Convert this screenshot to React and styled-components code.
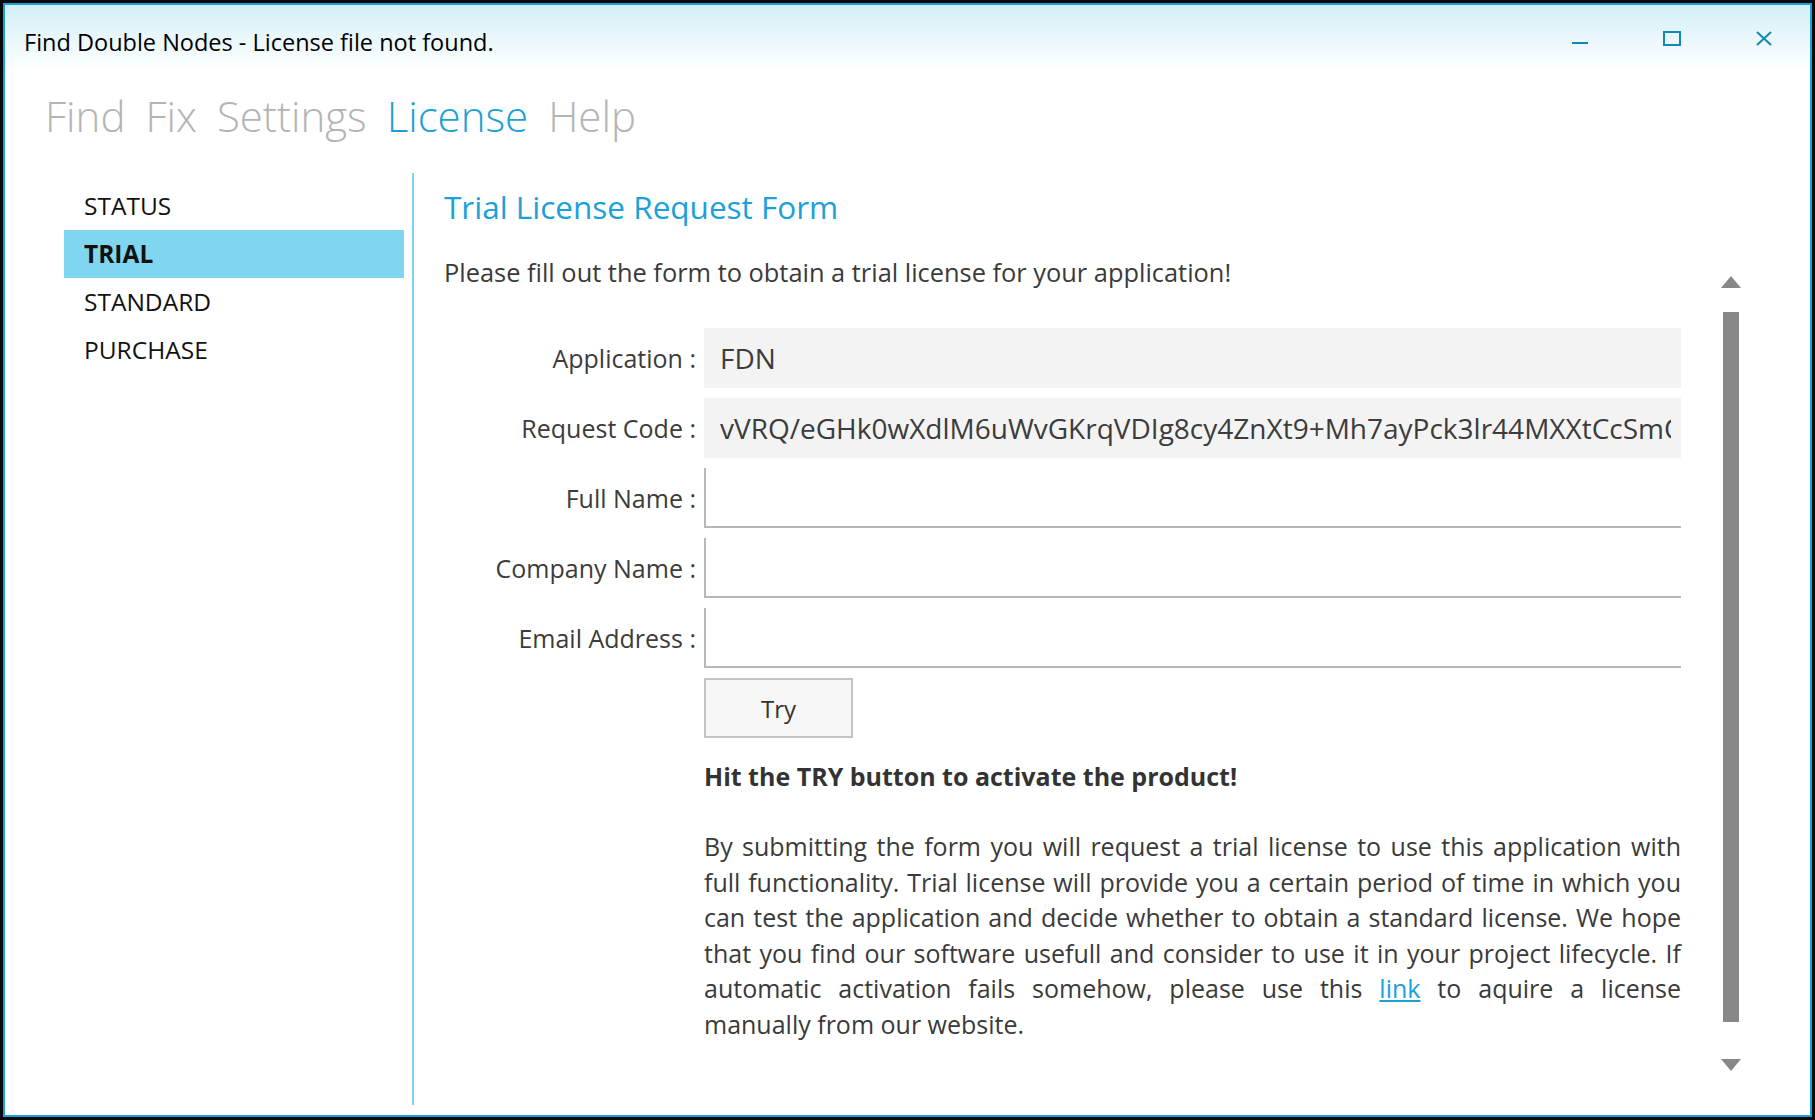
import React from "react";
import styled, { createGlobalStyle } from "styled-components";

const GlobalStyle = createGlobalStyle`
  html, body {
    margin: 0;
    padding: 0;
    background: #0a0a0a;
  }
  body {
    font-family: "Open Sans", "Noto Sans", sans-serif;
    overflow: hidden;
  }
`;

const Frame = styled.div`
  box-sizing: border-box;
  width: 1815px;
  height: 1120px;
  border: 3px solid #0a0a0a;
`;

const Window = styled.div`
  box-sizing: border-box;
  height: 100%;
  border: 2px solid #17a3d9;
  background: #fff;
  display: flex;
  flex-direction: column;
`;

const TitleBar = styled.div`
  height: 66px;
  flex: none;
  display: flex;
  justify-content: space-between;
  background: linear-gradient(to bottom, #d3eff8 0%, #ffffff 100%);
`;

const Title = styled.div`
  padding: 22px 0 0 19px;
  font-size: 23.5px;
  line-height: 30px;
  color: #000;
`;

const Controls = styled.div`
  display: flex;
`;

const Control = styled.button`
  width: 92px;
  height: 66px;
  padding: 26px 0 0;
  border: none;
  background: transparent;
  display: flex;
  justify-content: center;
  align-items: flex-start;
  color: #1288b7;
`;

const NavBar = styled.nav`
  height: 102px;
  flex: none;
  box-sizing: border-box;
  padding: 17px 0 0 40px;
  display: flex;
  gap: 20px;
`;

const NavItem = styled.span`
  font-size: 42px;
  font-weight: 300;
  line-height: 56px;
  color: ${(p) => (p.$active ? "#1ba1d8" : "#b4b4b4")};
`;

const Body = styled.div`
  flex: 1;
  display: grid;
  grid-template-columns: 407px 2px 1fr;
  padding-bottom: 10px;
  min-height: 0;
`;

const Sidebar = styled.ul`
  list-style: none;
  margin: 0;
  padding: 9px 0 0 59px;
`;

const SideItem = styled.li`
  box-sizing: border-box;
  width: 340px;
  height: 48px;
  padding-left: 20px;
  line-height: 48px;
  font-size: 24.5px;
  color: #111;
  font-weight: ${(p) => (p.$active ? 700 : 400)};
  background: ${(p) => (p.$active ? "#80d5ef" : "transparent")};
`;

const Divider = styled.div`
  background: #80d2ee;
`;

const Content = styled.div`
  padding: 14px 0 0 30px;
  display: grid;
  grid-template-columns: 1237px 22px;
  column-gap: 39px;
  align-items: start;
`;

const Main = styled.div`
  display: flex;
  flex-direction: column;
`;

const Heading = styled.h1`
  margin: 0;
  font-size: 31.5px;
  line-height: 40px;
  font-weight: 400;
  color: #1ba1d8;
`;

const Intro = styled.p`
  margin: 29px 0 0;
  font-size: 25.4px;
  line-height: 32px;
  color: #3a3a3a;
`;

const Form = styled.div`
  margin-top: 40px;
  display: grid;
  grid-template-columns: 252px 977px;
  grid-auto-rows: 60px;
  column-gap: 8px;
  row-gap: 10px;
`;

const Label = styled.label`
  display: flex;
  align-items: center;
  justify-content: flex-end;
  font-size: 25px;
  color: #3c3c3c;
  white-space: nowrap;
`;

const ReadOnly = styled.div`
  display: flex;
  align-items: center;
  padding: 0 10px 0 16px;
  background: #f3f3f3;
  font-size: 28px;
  color: #3c3c3c;
  min-width: 0;
`;

const Clip = styled.span`
  display: block;
  overflow: hidden;
  white-space: nowrap;
`;

const Input = styled.input`
  box-sizing: border-box;
  width: 100%;
  height: 60px;
  border: none;
  border-left: 2px solid #b8b8b8;
  border-bottom: 2px solid #b8b8b8;
  outline: none;
  background: #fff;
  font: inherit;
  font-size: 24px;
`;

const TryButton = styled.button`
  grid-column: 2;
  justify-self: start;
  width: 149px;
  height: 60px;
  border: 2px solid #c3c3c3;
  background: #f7f7f7;
  font-family: inherit;
  font-size: 24px;
  color: #333;
`;

const Hint = styled.p`
  margin: 22px 0 0 260px;
  font-size: 25px;
  line-height: 32px;
  font-weight: 700;
  color: #333;
`;

const Text = styled.p`
  margin: 37px 0 0 260px;
  width: 977px;
  font-size: 25px;
  line-height: 35.5px;
  color: #3a3a3a;
`;

const Line = styled.span`
  display: block;
  white-space: nowrap;
  text-align: justify;
  text-align-last: ${(p) => (p.$last ? "left" : "justify")};
`;

const Link = styled.a`
  color: #1ba1d8;
  text-decoration: underline;
`;

const ScrollBar = styled.div`
  margin-top: 89px;
  height: 795px;
  display: flex;
  flex-direction: column;
  align-items: center;
`;

const Arrow = styled.div`
  width: 0;
  height: 0;
  border-left: 10px solid transparent;
  border-right: 10px solid transparent;
  ${(p) =>
    p.$down
      ? "border-top: 12px solid #878787;"
      : "border-bottom: 12px solid #878787;"}
`;

const Thumb = styled.div`
  width: 16px;
  flex: 1;
  margin: 24px 0 37px;
  background: #878787;
`;

const fields = [
  { label: "Application :", value: "FDN" },
  {
    label: "Request Code :",
    value:
      "vVRQ/eGHk0wXdlM6uWvGKrqVDIg8cy4ZnXt9+Mh7ayPck3lr44MXXtCcSmQx2Lw==",
  },
];

const inputs = ["Full Name :", "Company Name :", "Email Address :"];

export default function App() {
  return (
    <>
      <GlobalStyle />
      <Frame>
        <Window>
          <TitleBar>
            <Title>Find Double Nodes - License file not found.</Title>
            <Controls>
              <Control aria-label="Minimize">
                <svg width="16" height="16" viewBox="0 0 16 16">
                  <rect x="0" y="11" width="16" height="2" fill="currentColor" />
                </svg>
              </Control>
              <Control aria-label="Maximize">
                <svg width="18" height="16" viewBox="0 0 18 16">
                  <rect x="1" y="1" width="16" height="13" fill="none" stroke="currentColor" strokeWidth="2" />
                </svg>
              </Control>
              <Control aria-label="Close">
                <svg width="16" height="16" viewBox="0 0 16 16">
                  <path d="M1 1 L15 14 M15 1 L1 14" stroke="currentColor" strokeWidth="2" fill="none" />
                </svg>
              </Control>
            </Controls>
          </TitleBar>

          <NavBar>
            <NavItem>Find</NavItem>
            <NavItem>Fix</NavItem>
            <NavItem>Settings</NavItem>
            <NavItem $active>License</NavItem>
            <NavItem>Help</NavItem>
          </NavBar>

          <Body>
            <Sidebar>
              <SideItem>STATUS</SideItem>
              <SideItem $active>TRIAL</SideItem>
              <SideItem>STANDARD</SideItem>
              <SideItem>PURCHASE</SideItem>
            </Sidebar>
            <Divider />
            <Content>
              <Main>
                <Heading>Trial License Request Form</Heading>
                <Intro>
                  Please fill out the form to obtain a trial license for your
                  application!
                </Intro>
                <Form>
                  {fields.map((f) => (
                    <React.Fragment key={f.label}>
                      <Label>{f.label}</Label>
                      <ReadOnly>
                        <Clip>{f.value}</Clip>
                      </ReadOnly>
                    </React.Fragment>
                  ))}
                  {inputs.map((l) => (
                    <React.Fragment key={l}>
                      <Label>{l}</Label>
                      <Input type="text" />
                    </React.Fragment>
                  ))}
                  <TryButton>Try</TryButton>
                </Form>
                <Hint>Hit the TRY button to activate the product!</Hint>
                <Text>
                  <Line>
                    By submitting the form you will request a trial license to
                    use this application with
                  </Line>
                  <Line>
                    full functionality. Trial license will provide you a certain
                    period of time in which you
                  </Line>
                  <Line>
                    can test the application and decide whether to obtain a
                    standard license. We hope
                  </Line>
                  <Line>
                    that you find our software usefull and consider to use it in
                    your project lifecycle. If
                  </Line>
                  <Line>
                    automatic activation fails somehow, please use this{" "}
                    <Link href="#">link</Link> to aquire a license
                  </Line>
                  <Line $last>manually from our website.</Line>
                </Text>
              </Main>
              <ScrollBar>
                <Arrow />
                <Thumb />
                <Arrow $down />
              </ScrollBar>
            </Content>
          </Body>
        </Window>
      </Frame>
    </>
  );
}
